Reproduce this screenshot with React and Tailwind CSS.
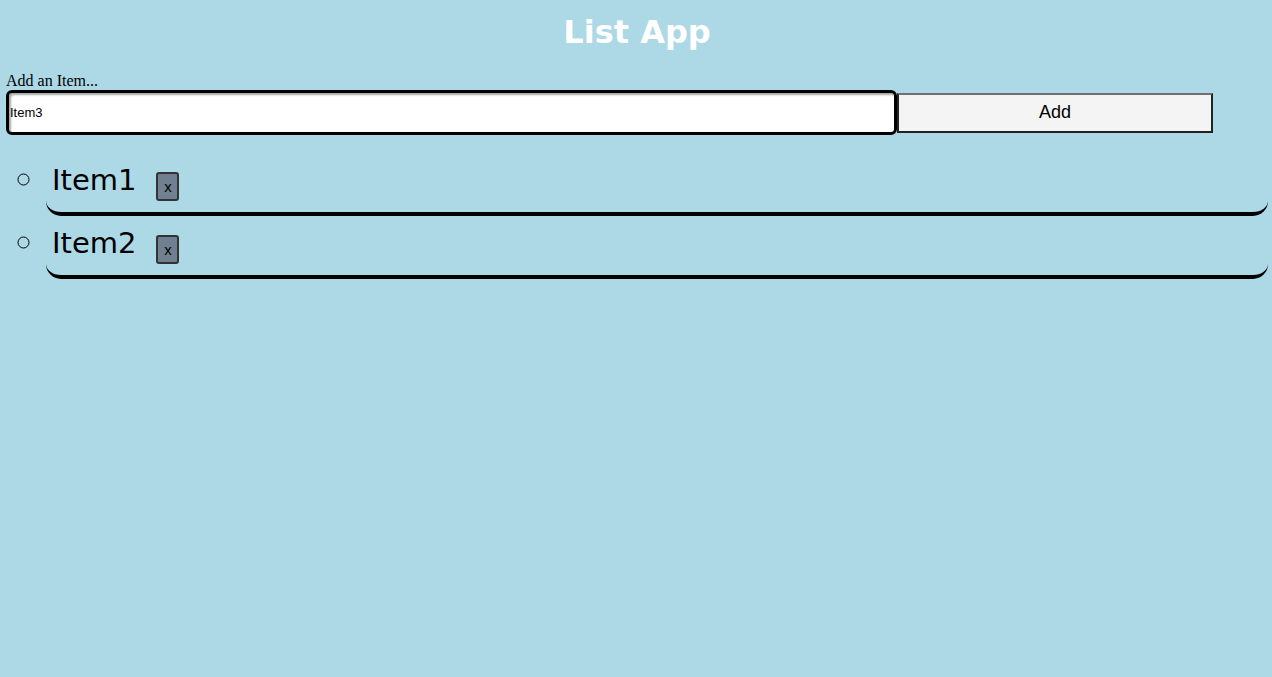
import { useState } from "react";

const App = () => {
  const [items, setItems] = useState(["Item1", "Item2"]);
  const [text, setText] = useState("Item3");

  const addItem = () => {
    if (!text.trim()) return;
    setItems([...items, text]);
    setText("");
  };

  const removeItem = (idx) => {
    setItems(items.filter((_, i) => i !== idx));
  };

  return (
    <div className="min-h-screen bg-[#add8e6] pl-[6px] pr-[4px]">
      <h1 className="pt-[14px] mb-[21px] text-center text-[32px] leading-[37px] font-bold text-white font-['DejaVu_Sans',sans-serif]">
        List App
      </h1>

      <label className="block text-[16px] leading-[18px] text-black font-['Liberation_Serif',serif]">
        Add an Item...
      </label>
      <div className="flex items-center">
        <input
          type="text"
          value={text}
          onChange={(e) => setText(e.target.value)}
          className="w-[891px] h-[45px] bg-white border-[3px] border-black rounded-[6px] pl-[1px] text-[13px] text-black outline-none font-['Liberation_Sans',sans-serif] shadow-[inset_2px_2px_2px_rgba(0,0,0,0.35)]"
        />
        <button
          onClick={addItem}
          className="w-[316px] h-[40px] bg-[#f4f4f4] border-2 border-[#222] border-t-[#707070] text-[18px] text-black font-['Liberation_Sans',sans-serif]"
        >
          Add
        </button>
      </div>

      <ul className="mt-[18px] pl-10 list-[circle] marker:text-[34px]">
        {items.map((item, idx) => (
          <li
            key={idx}
            className="pl-[4px] pt-[8px] pb-[11px] border-b-4 border-black rounded-b-[15px] text-[29px] leading-[35px] text-black font-['DejaVu_Sans',sans-serif]"
          >
            <span className="pl-[2px]">{item}</span>
            <button
              onClick={() => removeItem(idx)}
              className="ml-[20px] w-[23px] h-[29px] bg-[#708090] border-2 border-[#333] rounded-[3px] text-[15px] leading-none text-black align-[-2px] font-['Liberation_Sans',sans-serif]"
            >
              x
            </button>
          </li>
        ))}
      </ul>
    </div>
  );
};

export default App;
